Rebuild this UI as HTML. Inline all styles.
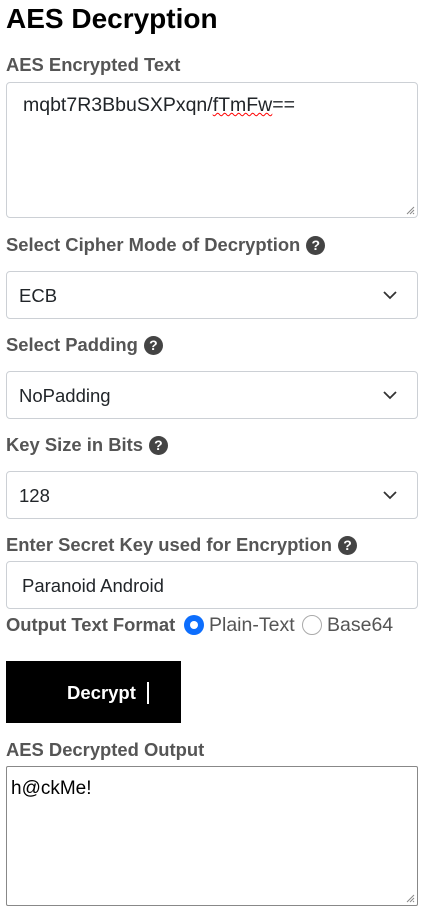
<!DOCTYPE html>
<html><head><style>
body{margin:0;width:424px;height:912px;background:#fff;font-family:"Liberation Sans",sans-serif;position:relative;overflow:hidden}
.a{position:absolute}
h1{position:absolute;left:6px;top:0;margin:0;font-size:28px;line-height:38px;font-weight:bold;color:#000}
.l{position:absolute;left:6px;font-size:18.4px;font-weight:bold;color:#555;line-height:20px;white-space:nowrap}
.box{position:absolute;left:6px;width:410px;border:1px solid #ccd0d5;border-radius:4px;background:#fff;box-sizing:content-box}
.t{position:absolute;font-size:19.5px;color:#212529;line-height:20px;white-space:nowrap}
.q{display:inline-block;width:19px;height:19px;border-radius:50%;background:#444;color:#fff;font-size:14px;line-height:19px;text-align:center;vertical-align:1px;margin-left:6px}
.chev{position:absolute;right:20px;top:18px}
</style></head><body>
<h1>AES Decryption</h1>
<div class="l" style="top:55px">AES Encrypted Text</div>
<div class="box" style="top:82px;height:134px">
<div class="t" style="left:16px;top:12px">mqbt7R3BbuSXPxqn/<span style="text-decoration:underline wavy red;text-decoration-thickness:1px">fTmFw</span>==</div>
<svg class="a" style="right:2px;bottom:2px" width="10" height="10"><path d="M9 2L2 9M9 5L5 9M9 8L8 9" stroke="#888" stroke-width="1"/></svg>
</div>
<div class="l" style="top:235px">Select Cipher Mode of Decryption<span class="q">?</span></div>
<div class="box" style="top:271px;height:46px"><div class="t" style="left:12px;top:14px;font-size:18.5px">ECB</div><svg class="chev" width="14" height="10"><path d="M1 2l6 6 6-6" stroke="#333" stroke-width="1.8" fill="none"/></svg></div>
<div class="l" style="top:335px">Select Padding<span class="q">?</span></div>
<div class="box" style="top:371px;height:46px"><div class="t" style="left:12px;top:14px;font-size:18.5px">NoPadding</div><svg class="chev" width="14" height="10"><path d="M1 2l6 6 6-6" stroke="#333" stroke-width="1.8" fill="none"/></svg></div>
<div class="l" style="top:435px">Key Size in Bits<span class="q">?</span></div>
<div class="box" style="top:471px;height:46px"><div class="t" style="left:12px;top:14px;font-size:18.5px">128</div><svg class="chev" width="14" height="10"><path d="M1 2l6 6 6-6" stroke="#333" stroke-width="1.8" fill="none"/></svg></div>
<div class="l" style="top:535px">Enter Secret Key used for Encryption<span class="q">?</span></div>
<div class="box" style="top:561px;height:46px"><div class="t" style="left:15px;top:14px;font-size:18.5px">Paranoid Android</div></div>
<div class="l" style="top:615px">Output Text Format</div>
<div class="a" style="left:184px;top:615px;width:20px;height:20px;border-radius:50%;background:#0d6efd"><div class="a" style="left:6px;top:6px;width:8px;height:8px;border-radius:50%;background:#fff"></div></div>
<div class="t" style="left:209px;top:615px;color:#555">Plain-Text</div>
<div class="a" style="left:302px;top:615px;width:18px;height:18px;border-radius:50%;border:1px solid #aaa"></div>
<div class="t" style="left:327px;top:615px;color:#555">Base64</div>
<div class="a" style="left:6px;top:661px;width:175px;height:62px;background:#000"></div>
<div class="a" style="left:67px;top:683px;color:#fff;font-weight:bold;font-size:18.5px;line-height:20px">Decrypt</div>
<div class="a" style="left:147px;top:682px;width:2px;height:22px;background:#fff"></div>
<div class="l" style="top:740px">AES Decrypted Output</div>
<div class="box" style="top:766px;height:138px;border-color:#888;border-radius:2px">
<div class="t" style="left:4px;top:12px;color:#000;font-size:19px">h@ckMe!</div>
<svg class="a" style="right:2px;bottom:2px" width="10" height="10"><path d="M9 2L2 9M9 5L5 9M9 8L8 9" stroke="#888" stroke-width="1"/></svg>
</div>
</body></html>
